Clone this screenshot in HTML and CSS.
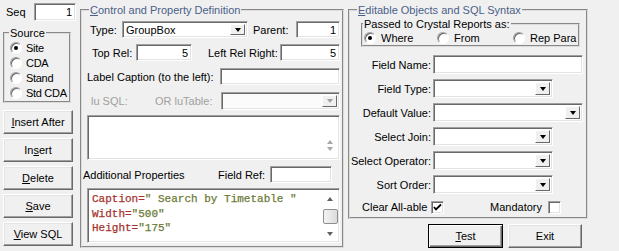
FILE: index.html
```html
<!DOCTYPE html>
<html lang="en">

<head>
  <meta charset="UTF-8" />
  <meta name="viewport" content="width=device-width, initial-scale=1.0" />
  <title>Report Field Definition</title>
  <link rel="stylesheet" href="styles.css">
</head>

<body>
  <!-- Left column: sequence, source and record buttons -->
  <div class="side">
    <div class="seq-row">
      <span class="seq-label">Seq</span>
      <input class="box num seq-box" type="text" value="1" />
    </div>

    <fieldset class="frame source">
      <legend>Source</legend>
      <div class="radio-row"><span class="radio on"></span>Site</div>
      <div class="radio-row"><span class="radio"></span>CDA</div>
      <div class="radio-row"><span class="radio"></span>Stand</div>
      <div class="radio-row"><span class="radio"></span>Std CDA</div>
    </fieldset>

    <div class="side-buttons">
      <button class="btn side-btn"><u>I</u>nsert After</button>
      <button class="btn side-btn">In<u>s</u>ert</button>
      <button class="btn side-btn"><u>D</u>elete</button>
      <button class="btn side-btn"><u>S</u>ave</button>
      <button class="btn side-btn"><u>V</u>iew SQL</button>
    </div>
  </div>

  <!-- Control and Property Definition -->
  <fieldset class="frame control">
    <legend class="blue"><u>C</u>ontrol and Property Definition</legend>

    <div class="row r1">
      <span class="lbl w-type">Type:</span>
      <div class="box combo w-typebox"><span class="val">GroupBox</span><span class="arrow"></span></div>
      <span class="lbl w-parent">Parent:</span>
      <input class="box num w-parentbox" type="text" value="1" />
    </div>

    <div class="row r2">
      <span class="lbl w-top">Top Rel:</span>
      <input class="box num w-topbox" type="text" value="5" />
      <span class="lbl w-left">Left Rel Right:</span>
      <input class="box num w-leftbox" type="text" value="5" />
    </div>

    <div class="row r3">
      <span class="lbl w-caption">Label Caption (to the left):</span>
      <input class="box w-captionbox" type="text" value="" />
    </div>

    <div class="row r4">
      <span class="lbl dim w-lusql">lu SQL:</span>
      <span class="lbl dim w-lutable">OR luTable:</span>
      <div class="box combo off w-lutablebox"><span class="val"></span><span class="arrow"></span></div>
    </div>

    <div class="box memo">
      <div class="memo-body"></div>
      <div class="vscroll flat">
        <span class="sarrow up"></span>
        <span class="sarrow down"></span>
      </div>
    </div>

    <div class="row r5">
      <span class="lbl w-extra">Additional Properties</span>
      <span class="lbl w-ref">Field Ref:</span>
      <input class="box w-refbox" type="text" value="" />
    </div>

    <div class="box code">
      <div class="code-text">
        <div class="line"><span class="k">Caption=</span><span class="s">" Search by Timetable "</span></div>
        <div class="line"><span class="k">Width=</span><span class="s">"500"</span></div>
        <div class="line"><span class="k">Height=</span><span class="s">"175"</span></div>
      </div>
      <div class="vscroll">
        <span class="sarrow up"></span>
        <span class="thumb"></span>
        <span class="sarrow down"></span>
      </div>
    </div>
  </fieldset>

  <!-- Editable Objects and SQL Syntax -->
  <div class="right">
    <fieldset class="frame editable">
      <legend class="blue"><u>E</u>ditable Objects and SQL Syntax</legend>

      <fieldset class="frame passed">
        <legend>Passed to Crystal Reports as:</legend>
        <div class="radio-line">
          <div class="radio-row w-where"><span class="radio on"></span>Where</div>
          <div class="radio-row w-from"><span class="radio"></span>From</div>
          <div class="radio-row"><span class="radio"></span>Rep Para</div>
        </div>
      </fieldset>

      <div class="fields">
        <span class="flabel">Field Name:</span>
        <input class="box long" type="text" value="" />
        <span class="flabel">Field Type:</span>
        <div class="box combo short"><span class="val"></span><span class="arrow"></span></div>
        <span class="flabel">Default Value:</span>
        <div class="box combo long"><span class="val"></span><span class="arrow"></span></div>
        <span class="flabel">Select Join:</span>
        <div class="box combo short"><span class="val"></span><span class="arrow"></span></div>
        <span class="flabel">Select Operator:</span>
        <div class="box combo short"><span class="val"></span><span class="arrow"></span></div>
        <span class="flabel">Sort Order:</span>
        <div class="box combo short"><span class="val"></span><span class="arrow"></span></div>
      </div>

      <div class="checks">
        <span class="w-clear">Clear All-able</span>
        <span class="check">
          <svg width="9" height="9" viewBox="0 0 9 9"><path d="M1 4 L3 6.5 L8 1.5" fill="none" stroke="#000" stroke-width="1.8" /></svg>
        </span>
        <span class="w-mand">Mandatory</span>
        <span class="check"></span>
      </div>
    </fieldset>

    <div class="actions">
      <button class="btn default w-test"><u>T</u>est</button>
      <button class="btn w-exit">Exit</button>
    </div>
  </div>
</body>

</html>
```

FILE: styles.css
```css
* {
  box-sizing: border-box;
}

body {
  margin: 0;
  width: 619px;
  height: 251px;
  overflow: hidden;
  background: #f0f0f0;
  color: #000;
  font-family: "Liberation Sans", Arial, sans-serif;
  font-size: 11px;
  display: flex;
  align-items: flex-start;
}

u {
  text-decoration: underline;
  text-underline-offset: 1px;
}

/* group boxes */
.frame {
  margin: 0;
  padding: 0;
  min-width: 0;
  border: 2px groove #dcdcdc;
}

.frame legend {
  padding: 0 1px;
  line-height: 14px;
}

.blue {
  color: #4a5f88;
}

/* sunken boxes */
.box {
  display: block;
  margin: 0;
  padding: 0 3px;
  font: inherit;
  color: #000;
  background: #fff;
  border: 1px solid;
  border-color: #a0a0a0 #fff #fff #a0a0a0;
  box-shadow: inset 1px 1px #696969, inset -1px -1px #e3e3e3;
  outline: none;
}

.num {
  text-align: right;
}

/* raised buttons */
.btn {
  display: block;
  margin: 0;
  padding: 0;
  height: 24px;
  font: inherit;
  color: #000;
  background: #f0f0f0;
  border: 1px solid;
  border-color: #fff #696969 #696969 #fff;
  box-shadow: inset -1px -1px #a0a0a0, inset 1px 1px #e3e3e3;
}

.btn.default {
  border: 1px solid #000;
  box-shadow: inset 1px 1px #fff, inset -1px -1px #696969, inset -2px -2px #a0a0a0;
}

/* radios and checks */
.radio-row {
  display: flex;
  align-items: center;
  height: 15px;
  white-space: nowrap;
}

.radio {
  flex: none;
  width: 12px;
  height: 12px;
  margin-right: 5px;
  border-radius: 50%;
  background: #fff;
  border: 1px solid;
  border-color: #a0a0a0 #fff #fff #a0a0a0;
  box-shadow: inset 1px 1px #696969;
  display: flex;
  align-items: center;
  justify-content: center;
}

.radio.on::after {
  content: "";
  width: 4px;
  height: 4px;
  border-radius: 50%;
  background: #000;
}

.check {
  width: 13px;
  height: 13px;
  background: #fff;
  border: 1px solid;
  border-color: #a0a0a0 #fff #fff #a0a0a0;
  box-shadow: inset 1px 1px #696969, inset -1px -1px #e3e3e3;
  display: flex;
  align-items: center;
  justify-content: center;
}

/* combo boxes */
.combo {
  display: flex;
  padding: 2px 2px 2px 3px;
}

.combo .val {
  flex: 1;
  line-height: 13px;
}

.combo .arrow {
  width: 15px;
  background: #f0f0f0;
  border: 1px solid;
  border-color: #fff #696969 #696969 #fff;
  display: flex;
  align-items: center;
  justify-content: center;
}

.combo .arrow::after {
  content: "";
  border-left: 3.5px solid transparent;
  border-right: 3.5px solid transparent;
  border-top: 4px solid #000;
}

.combo.off {
  background: #fbfbfb;
}

.combo.off .arrow::after {
  border-top-color: #a0a0a0;
}

/* left column */
.side {
  width: 80px;
  padding-left: 3px;
}

.seq-row {
  display: flex;
  align-items: center;
  height: 18px;
  margin-top: 3px;
}

.seq-label {
  width: 31px;
  padding-left: 3px;
}

.seq-box {
  width: 42px;
  height: 18px;
}

.source {
  width: 68px;
  margin-top: 5px;
  padding-bottom: 1px;
}

.source legend {
  margin-left: 4px;
}

.source .radio-row {
  padding-left: 5px;
  letter-spacing: -0.3px;
}

.source .radio {
  margin-right: 4px;
}

.side-buttons {
  margin-top: 7px;
}

.side-btn {
  width: 70px;
  margin-bottom: 4px;
}

/* control and property definition */
.control {
  width: 264px;
  height: 245px;
  margin-top: 3px;
  padding-bottom: 3px;
}

.control legend {
  margin-left: 7px;
}

.row {
  display: flex;
  align-items: center;
}

.row .box {
  height: 100%;
}

.lbl {
  white-space: nowrap;
}

.dim {
  color: #a0a0a0;
}

.r1 {
  height: 17px;
  margin: 4px 0 0 8px;
}

.r2 {
  height: 17px;
  margin: 6px 0 0 10px;
}

.r3 {
  height: 17px;
  margin: 7px 0 0 5px;
}

.r4 {
  height: 18px;
  margin: 7px 0 0 9px;
}

.r5 {
  height: 17px;
  margin: 6px 0 0 1px;
}

.w-type { width: 32px; }
.w-typebox { width: 126px; }
.w-parent { width: 43px; margin-left: 5px; }
.w-parentbox { width: 44px; }
.w-top { width: 44px; }
.w-topbox { width: 56px; }
.w-left { width: 72px; margin-left: 16px; }
.w-leftbox { width: 60px; }
.w-caption { width: 133px; }
.w-captionbox { width: 120px; }
.w-lusql { width: 64px; }
.w-lutable { width: 66px; }
.w-lutablebox { width: 119px; }
.w-extra { width: 135px; }
.w-ref { width: 52px; }
.w-refbox { width: 62px; }

.memo,
.code {
  display: flex;
  width: 253px;
  margin-left: 5px;
  padding: 2px 1px 2px 2px;
}

.memo {
  height: 45px;
  margin-top: 5px;
}

.memo-body {
  flex: 1;
}

.code {
  height: 55px;
  margin-top: 5px;
}

.code-text {
  flex: 1;
  padding: 1px 0 0 2px;
  font-family: "Liberation Mono", "Courier New", monospace;
  font-size: 11px;
  line-height: 14.5px;
}

.line {
  white-space: pre;
  -webkit-text-stroke: 0.25px currentColor;
}

.k {
  color: #a5322d;
}

.s {
  color: #6b7b35;
}

.vscroll {
  width: 16px;
  display: flex;
  flex-direction: column;
  align-items: center;
}

.vscroll.flat {
  justify-content: flex-end;
  padding-bottom: 5px;
}

.sarrow {
  height: 13px;
  display: flex;
  align-items: center;
}

.sarrow.up::after {
  content: "";
  border-left: 3.5px solid transparent;
  border-right: 3.5px solid transparent;
  border-bottom: 4px solid #606060;
}

.sarrow.down::after {
  content: "";
  border-left: 3.5px solid transparent;
  border-right: 3.5px solid transparent;
  border-top: 4px solid #606060;
}

.flat .sarrow {
  height: 7px;
}

.flat .sarrow::after {
  border-top-color: #a8a8a8;
  border-bottom-color: #a8a8a8;
}

.code .sarrow.up {
  height: 16px;
}

.code .sarrow.down {
  margin-top: auto;
  height: 12px;
}

.thumb {
  width: 15px;
  height: 15px;
  margin-top: 2px;
  border: 1px solid #8e8f8f;
  border-radius: 2px;
  background: linear-gradient(to right, #f3f3f3, #dcdcdc);
}

/* editable objects */
.right {
  margin-left: 4px;
}

.editable {
  width: 240px;
  height: 216px;
  margin-top: 3px;
}

.editable legend {
  margin-left: 7px;
}

.passed {
  width: 219px;
  margin-left: 11px;
}

.passed legend {
  margin-left: 0;
}

.radio-line {
  display: flex;
  height: 14px;
  padding-left: 1px;
}

.radio-line .radio-row {
  height: 14px;
}

.w-where { width: 73px; }
.w-from { width: 76px; }

.fields {
  display: grid;
  grid-template-columns: 81px auto;
  grid-auto-rows: 19px;
  row-gap: 5px;
  column-gap: 2px;
  margin-top: 8px;
  align-items: center;
}

.flabel {
  text-align: right;
  white-space: nowrap;
}

.fields .box {
  height: 19px;
}

.fields .long {
  width: 150px;
}

.fields .short {
  width: 120px;
}

.checks {
  display: flex;
  align-items: center;
  height: 14px;
  margin-top: 6px;
  padding-left: 12px;
}

.w-clear {
  width: 69px;
}

.w-mand {
  width: 58px;
  margin-left: 46px;
}

.actions {
  display: flex;
  margin-top: 5px;
  padding-left: 80px;
}

.w-test { width: 75px; }
.w-exit { width: 74px; margin-left: 5px; }
```
